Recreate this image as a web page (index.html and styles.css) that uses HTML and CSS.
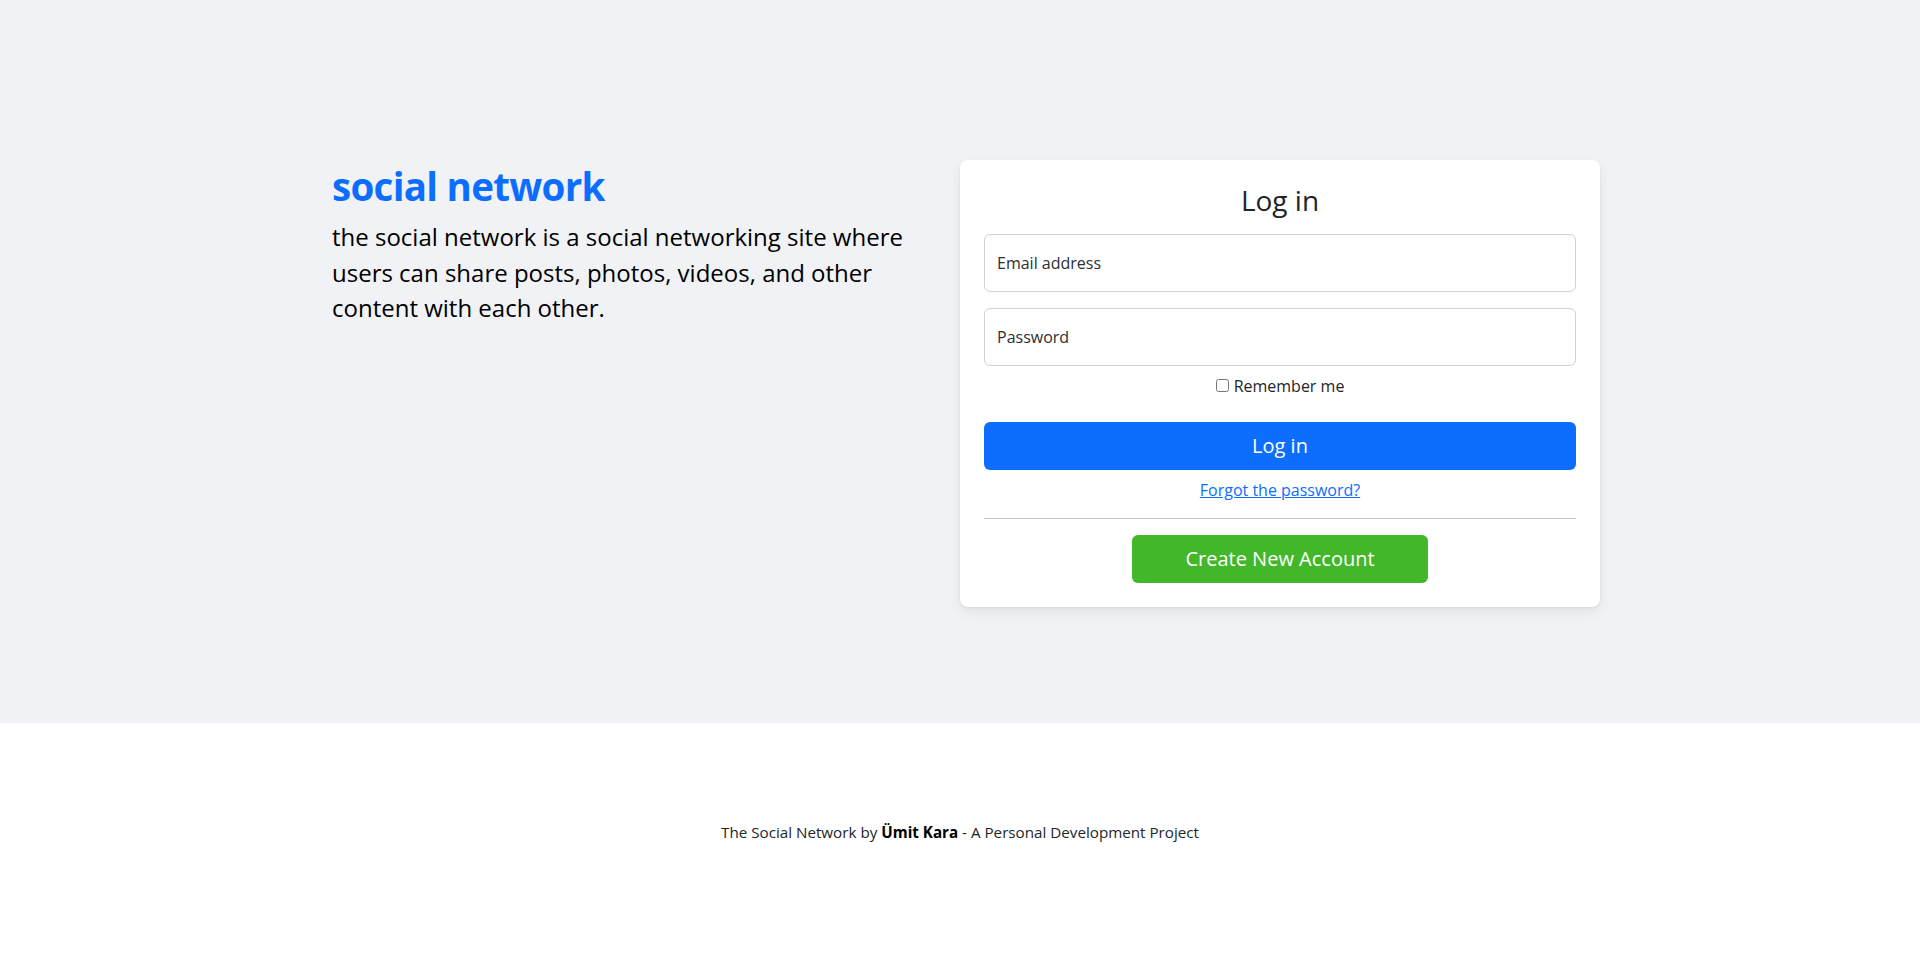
FILE: index.html
```html
<!DOCTYPE html>
<html lang="en">
<head>
<meta charset="utf-8">
<title>The Social Network - Log in</title>
<link rel="stylesheet" href="styles.css">
</head>
<body>
<main class="hero">
  <div class="hero-inner">
    <section class="intro">
      <h1 class="brand">social network</h1>
      <p class="tagline">the social network is a social networking site where users can share posts, photos, videos, and other content with each other.</p>
    </section>
    <section class="card">
      <h3 class="card-title">Log in</h3>
      <form class="login-form">
        <input class="field" type="email" placeholder="Email address">
        <input class="field field-last" type="password" placeholder="Password">
        <label class="remember"><input type="checkbox" class="check"><span>Remember me</span></label>
        <button type="button" class="btn btn-primary">Log in</button>
        <a href="#" class="forgot">Forgot the password?</a>
        <hr class="divider">
        <button type="button" class="btn btn-success">Create New Account</button>
      </form>
    </section>
  </div>
</main>
<footer class="footer">
  <p class="footer-text">The Social Network by <strong class="author">Ümit Kara</strong> - A Personal Development Project</p>
</footer>
</body>
</html>
```

FILE: styles.css
```css
* { box-sizing: border-box; }
html, body { margin: 0; padding: 0; }
body {
  font-family: "Segoe UI", "Open Sans", "Noto Sans", sans-serif;
  color: #212529;
  background: #fff;
  font-size: 16px;
  line-height: 1.5;
}
.hero {
  background: #f0f2f5;
  min-height: 723px;
  padding-top: 160px;
}
.hero-inner {
  width: 1320px;
  margin: 0 auto;
  padding: 0 20px 0 32px;
  display: flex;
  align-items: flex-start;
}
.intro {
  flex: 0 0 628px;
  padding-right: 6px;
}
.brand {
  margin: 0 0 8px;
  padding-top: 3px;
  font-size: 38.5px;
  line-height: 46px;
  font-weight: 700;
  color: #0d6efd;
  letter-spacing: -0.7px;
}
.tagline {
  margin: 0;
  padding-top: 2px;
  font-size: 24px;
  line-height: 35.5px;
  color: #000;
}
.card {
  flex: 0 0 640px;
  background: #fff;
  border-radius: 8px;
  padding: 24px;
  box-shadow: 0 1px 3px rgba(0,0,0,0.07), 0 6px 14px rgba(0,0,0,0.06);
}
.card-title {
  margin: 0 0 16px;
  font-size: 28px;
  line-height: 1.2;
  font-weight: 400;
  text-align: center;
}
.login-form {
  display: flex;
  flex-direction: column;
  align-items: stretch;
}
.field {
  height: 58px;
  margin: 0 0 16px;
  padding: 0 12px;
  border: 1px solid #ced4da;
  border-radius: 6px;
  font-family: inherit;
  font-size: 16px;
  color: #212529;
  background: #fff;
  outline: none;
}
.field::placeholder { color: #2b2f33; opacity: 1; }
.field-last { margin-bottom: 8px; }
.remember {
  align-self: center;
  display: flex;
  align-items: center;
  gap: 5px;
  font-size: 16px;
  line-height: 24px;
  height: 24px;
}
.check {
  margin: 0;
  width: 13px;
  height: 13px;
}
.btn {
  height: 48px;
  border: 0;
  border-radius: 6px;
  font-family: inherit;
  font-size: 20px;
  line-height: 30px;
  color: #fff;
  cursor: pointer;
}
.btn-primary {
  margin-top: 24px;
  background: #0d6efd;
}
.forgot {
  align-self: center;
  margin-top: 8px;
  font-size: 16px;
  line-height: 24px;
  color: #0d6efd;
  text-decoration: underline;
}
.divider {
  width: 100%;
  margin: 16px 0;
  border: 0;
  border-top: 1px solid #c9c9c9;
  height: 0;
}
.btn-success {
  align-self: center;
  width: 50%;
  background: #42b72a;
}
.footer {
  padding: 98px 0;
  text-align: center;
}
.footer-text {
  margin: 0;
  font-size: 15.2px;
  line-height: 23px;
  color: #212529;
}
.author { color: #000; font-weight: 700; }
```
